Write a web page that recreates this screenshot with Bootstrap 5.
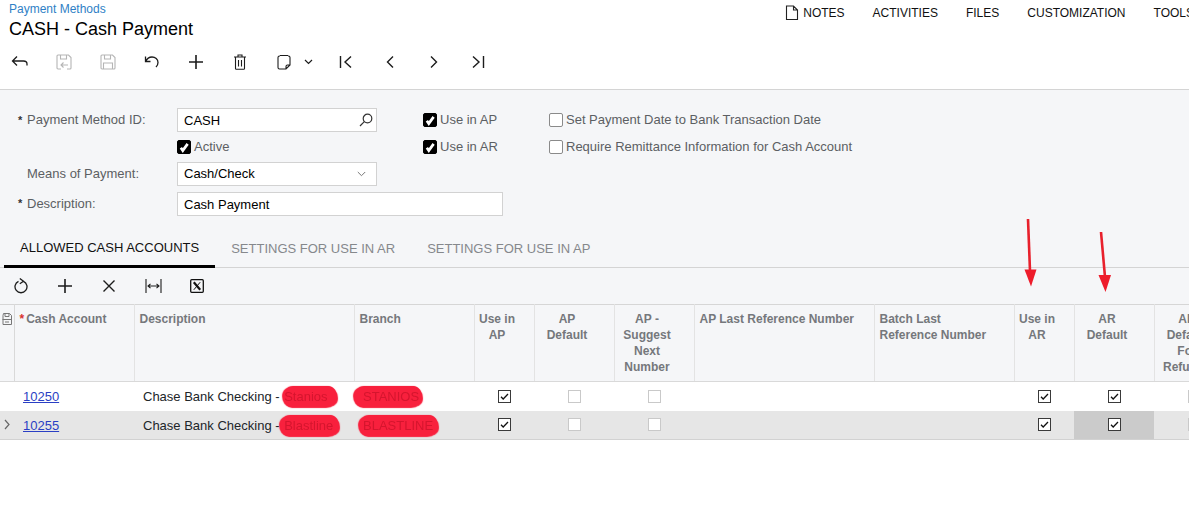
<!DOCTYPE html>
<html lang="en">
<head>
  <meta charset="UTF-8" />
  <title>CASH - Cash Payment</title>
  <link href="https://cdn.jsdelivr.net/npm/bootstrap@5.3.0/dist/css/bootstrap.min.css" rel="stylesheet" />
  <style>
    html, body { height: 100%; overflow: hidden; }
    body { font-family: "Liberation Sans", Arial, sans-serif; font-size: 13px; color: #000; background: #fff; }
    svg { display: block; }
    .page-wrap { width: 1189px; height: 523px; overflow: hidden; }

    .top-head { height: 90px; border-bottom: 1px solid #d4d4d4; }
    .title-box { padding-left: 9px; }
    .crumb-link { color: #2f7fc6; font-size: 12px; line-height: 14px; padding-top: 2px; text-decoration: none; }
    .page-title { font-size: 18px; line-height: 24px; margin: 0; font-weight: 400; padding-top: 1px; }
    .top-menu { gap: 28px; font-size: 12px; line-height: 14px; padding-top: 5px; white-space: nowrap; margin-right: -5px; }
    .top-menu span { color: #111; }
    .main-tools { height: 36px; margin-left: -2px; margin-top: 3px; }
    .tool-btn { width: 44px; height: 36px; padding: 0; border: 0; background: none; color: #1c1c1c; display: flex; align-items: center; justify-content: center; flex: none; }
    .tool-btn.is-off { color: #b5b5b5; }
    .tool-btn.is-clip { margin-right: -4px; }
    .tool-btn.is-narrow { width: 12px; margin-right: 10px; }

    .form-area { background: #f5f6f8; height: 140px; padding-top: 18px; }
    .form-grid { display: grid; grid-template-columns: 177px 200px 46px 126px auto; grid-template-rows: 24px 24px 24px 24px; row-gap: 3px; justify-content: start; }
    .form-grid > div { display: flex; align-items: center; color: #5c5f63; white-space: nowrap; }
    .fld-label { padding-left: 18px; }
    .req-mark { width: 9px; font-size: 11px; font-weight: 700; color: #333; line-height: 1; }
    .fld-input { height: 24px; border-radius: 0; border: 1px solid #d2d2d2; font-size: 13px; padding: 0 6px; color: #000; box-shadow: none; }
    .fld-select { height: 24px; border: 1px solid #d2d2d2; background: #fff; color: #000; padding: 0 6px; display: flex; align-items: center; justify-content: space-between; width: 100%; }
    .fld-search { position: relative; width: 100%; }
    .fld-search svg { position: absolute; right: 3px; top: 4px; }
    .desc-row { grid-column: 2 / 5; margin-top: 6px; }
    .desc-row .fld-input { width: 326px; flex: none; }
    .desc-lbl { margin-top: 5px; }
    .chk.form-check-input { width: 14px; height: 14px; margin: 0 3px 0 0; border-radius: 2px; border: 1px solid #8a8a8a; background-color: #fff; flex: none; }
    .chk.form-check-input:checked { background-color: #000; border-color: #000; background-size: 13px; background-image: url("data:image/svg+xml,%3csvg xmlns='http://www.w3.org/2000/svg' viewBox='0 0 14 14'%3e%3cpath fill='none' stroke='%23fff' stroke-width='2.8' d='M3.500 7.500l2 3L10.500 3.500'/%3e%3c/svg%3e"); }

    .tab-bar { background: #f5f6f8; height: 38px; border-bottom: 1px solid #d4d4d4; flex-wrap: nowrap; padding-left: 4px; }
    .tab-bar .nav-link { height: 38px; padding: 11px 16px 0; font-size: 13px; line-height: 16px; color: #85888c; border-bottom: 3px solid transparent; border-radius: 0; white-space: nowrap; }
    .tab-bar .nav-link.active { color: #111; border-bottom-color: #000; padding-top: 10px; }

    .grid-tools { background: #f5f6f8; height: 36px; margin-left: -1px; }
    .grid-wrap { width: 1234px; }
    .acc-table { table-layout: fixed; width: 1234px; margin: 0; border-collapse: collapse; font-size: 13px; }
    .acc-table > :not(caption) > * > * { padding: 0; box-shadow: none; border: 0; background: transparent; color: inherit; }
    .acc-table thead th { background: #f5f6f8; height: 77px; vertical-align: top; padding: 6px 18px 0 4px; font-size: 12px; line-height: 16px; font-weight: 700; color: #75787c; border-top: 1px solid #d6d6d6; border-bottom: 1px solid #d9d9d9; border-right: 1px solid #e3e3e3; text-align: center; overflow: hidden; }
    .acc-table thead th.txt-left { text-align: left; padding: 6px 16px 0 5px; }
    .acc-table thead th.col-menu { padding: 8px 0 0 2px; border-right-color: #d9d9d9; }
    .acc-table tbody td { height: 29px; vertical-align: middle; padding: 0 0 0 9px; white-space: nowrap; }
    .acc-table tbody td.chk-cell { padding: 0; }
    .acc-table tbody tr.row-on td { background: #e6e6e6; }
    .acc-table tbody tr.row-on td.txt-cell { padding-top: 2px; }
    .acc-table tbody tr.row-on { border-bottom: 1px solid #d2d2d2; }
    .acc-table tbody tr.row-on td.cell-on { background: #cbcbcb; }
    .acc-table tbody td.row-mark { padding: 0; color: #6d6d6d; }
    .acc-link { color: #2a3fc4; text-decoration: underline; }
    .grid-chk { margin: 0 auto; }
    .req-star { color: #d9322e; margin-right: 2px; }
    .smear { display: inline-block; line-height: 21px; height: 21px; background: #f8203d; color: #d5152e; vertical-align: baseline; border-radius: 11px 9px 12px 8px / 10px 11px 9px 11px; box-shadow: 1px 1px 1px #f8203d, -1px 0 1px #f8203d; filter: blur(.4px); }
    .smear-stanios { padding: 0 9px 0 1px; }
    .smear-blastline { padding: 0 6px 0 4px; margin-left: -3px; }
    .smear-stanios-br { padding: 0 3px 0 9px; margin-left: -9px; }
    .smear-blastline-br { padding: 0 5px 0 4px; margin-left: -4px; }
    .red-arrows { position: absolute; left: 0; top: 0; pointer-events: none; }
  </style>
</head>
<body>
  <div class="page-wrap position-relative">
    <div class="top-head">
      <div class="d-flex justify-content-between align-items-start">
        <div class="title-box d-flex flex-column">
          <a class="crumb-link" href="#">Payment Methods</a>
          <h1 class="page-title">CASH - Cash Payment</h1>
        </div>
        <div class="top-menu d-flex align-items-center flex-shrink-0" id="topMenu">
          <span class="d-flex align-items-center gap-1">
            <svg width="14" height="15" viewBox="0 0 14 15" fill="none" stroke="#222" stroke-width="1.1"><path d="M1.500 1h7l4 4v9.500h-11zM8.500 1v4h4"/></svg>
            NOTES
          </span>
          <span>ACTIVITIES</span>
          <span>FILES</span>
          <span>CUSTOMIZATION</span>
          <span>TOOLS</span>
        </div>
      </div>
      <div class="main-tools d-flex align-items-center">
        <button class="tool-btn" type="button"><svg width="18" height="14" viewBox="0 0 18 14" fill="none" stroke="currentColor" stroke-width="1.3"><path d="M6 1.500L1.500 6 6 10.500M1.500 6h11c2 0 3.500 1.300 3.500 3v1.500"/></svg></button>
        <button class="tool-btn is-off" type="button"><svg width="16" height="16" viewBox="0 0 16 16" fill="none" stroke="currentColor" stroke-width="1.1"><path d="M5 15H2a1 1 0 0 1-1-1V2a1 1 0 0 1 1-1h10.500l2.500 2.500V14a1 1 0 0 1-1 1h-3M4.500 1v4h6V1M5 11h7M7.500 8.500L5 11l2.500 2.500"/></svg></button>
        <button class="tool-btn is-off" type="button"><svg width="16" height="16" viewBox="0 0 16 16" fill="none" stroke="currentColor" stroke-width="1.1"><path d="M2 1h10.500L15 3.500V14a1 1 0 0 1-1 1H2a1 1 0 0 1-1-1V2a1 1 0 0 1 1-1zM4.500 1v4h6V1M3.500 15V9h9v6"/></svg></button>
        <button class="tool-btn" type="button"><svg width="16" height="14" viewBox="0 0 16 14" fill="none" stroke="currentColor" stroke-width="1.3"><path d="M1.500 1.500v5h5M1.800 6.500C3 3.500 5.300 2 8 2c3.300 0 6 2.400 6 5.500 0 1.700-.7 3.200-2 4.500"/></svg></button>
        <button class="tool-btn" type="button"><svg width="16" height="16" viewBox="0 0 16 16" stroke="currentColor" stroke-width="1.6"><path d="M8 1v14M1 8h14"/></svg></button>
        <button class="tool-btn" type="button"><svg width="14" height="16" viewBox="0 0 14 16" fill="none" stroke="currentColor" stroke-width="1.1"><path d="M1 3h12M5 3V1h4v2M2.500 3v11.500a.8.8 0 0 0 .8.8h7.400a.8.8 0 0 0 .8-.8V3M5.500 6v6.500M8.500 6v6.500"/></svg></button>
        <button class="tool-btn is-clip" type="button"><svg width="14" height="16" viewBox="0 0 14 16" fill="none" stroke="currentColor" stroke-width="1.1"><path d="M3 2H2.500A1.500 1.500 0 0 0 1 3.500v10A1.500 1.500 0 0 0 2.500 15H9l4-4V3.500A1.500 1.500 0 0 0 11.500 2H11M3 1.500h8M9 15v-2.500a1.500 1.500 0 0 1 1.500-1.500H13"/></svg></button>
        <button class="tool-btn is-narrow" type="button"><svg width="9" height="6" viewBox="0 0 9 6" fill="none" stroke="currentColor" stroke-width="1.2"><path d="M1 1l3.500 3.500L8 1"/></svg></button>
        <button class="tool-btn" type="button"><svg width="14" height="14" viewBox="0 0 14 14" fill="none" stroke="currentColor" stroke-width="1.4"><path d="M1.500 1v12M12 1.500L6 7l6 5.500"/></svg></button>
        <button class="tool-btn" type="button"><svg width="8" height="14" viewBox="0 0 8 14" fill="none" stroke="currentColor" stroke-width="1.4"><path d="M7 1.500L1.500 7 7 12.500"/></svg></button>
        <button class="tool-btn" type="button"><svg width="8" height="14" viewBox="0 0 8 14" fill="none" stroke="currentColor" stroke-width="1.4"><path d="M1 1.500L6.500 7 1 12.500"/></svg></button>
        <button class="tool-btn" type="button"><svg width="14" height="14" viewBox="0 0 14 14" fill="none" stroke="currentColor" stroke-width="1.4"><path d="M12.500 1v12M2 1.500L8 7l-6 5.500"/></svg></button>
      </div>
    </div>

    <div class="form-area">
      <div class="form-grid">
        <div class="fld-label"><span class="req-mark">*</span>Payment Method ID:</div>
        <div>
          <div class="fld-search">
            <input class="form-control fld-input" type="text" value="CASH" />
            <svg width="16" height="16" viewBox="0 0 16 16" fill="none" stroke="#333" stroke-width="1.2"><circle cx="9.500" cy="6.500" r="4.300"/><path d="M6.300 9.700L2 14"/></svg>
          </div>
        </div>
        <div></div>
        <div><input class="form-check-input chk" type="checkbox" checked />Use in AP</div>
        <div><input class="form-check-input chk" type="checkbox" />Set Payment Date to Bank Transaction Date</div>

        <div></div>
        <div><input class="form-check-input chk" type="checkbox" checked />Active</div>
        <div></div>
        <div><input class="form-check-input chk" type="checkbox" checked />Use in AR</div>
        <div><input class="form-check-input chk" type="checkbox" />Require Remittance Information for Cash Account</div>

        <div class="fld-label"><span class="req-mark"></span>Means of Payment:</div>
        <div>
          <div class="fld-select">Cash/Check
            <svg class="me-1" width="9" height="6" viewBox="0 0 9 6" fill="none" stroke="#777"><path d="M.8 1l3.700 3.700L8.200 1"/></svg>
          </div>
        </div>
        <div></div><div></div><div></div>

        <div class="fld-label desc-lbl"><span class="req-mark">*</span>Description:</div>
        <div class="desc-row"><input class="form-control fld-input" type="text" value="Cash Payment" /></div>
      </div>
    </div>

    <ul class="nav tab-bar">
      <li class="nav-item"><a class="nav-link active" href="#">ALLOWED CASH ACCOUNTS</a></li>
      <li class="nav-item"><a class="nav-link" href="#">SETTINGS FOR USE IN AR</a></li>
      <li class="nav-item"><a class="nav-link" href="#">SETTINGS FOR USE IN AP</a></li>
    </ul>

    <div class="grid-tools d-flex align-items-center">
      <button class="tool-btn" type="button"><svg width="16" height="16" viewBox="0 0 16 16" fill="none" stroke="currentColor" stroke-width="1.3"><path d="M5.500 3.300A6 6 0 1 0 10.500 3.300M6.800.5l3.700 2.800-3.700 2.400"/></svg></button>
      <button class="tool-btn" type="button"><svg width="16" height="16" viewBox="0 0 16 16" stroke="currentColor" stroke-width="1.6"><path d="M8 1v14M1 8h14"/></svg></button>
      <button class="tool-btn" type="button"><svg width="14" height="14" viewBox="0 0 14 14" stroke="currentColor" stroke-width="1.4"><path d="M1.500 1.500l11 11M12.500 1.500l-11 11"/></svg></button>
      <button class="tool-btn" type="button"><svg width="17" height="14" viewBox="0 0 17 14" fill="none" stroke="currentColor" stroke-width="1.100"><path d="M1 0v14M16 0v14M3 7h11M5.500 4.800L3 7l2.500 2.200M11.500 4.800L14 7l-2.500 2.200"/></svg></button>
      <button class="tool-btn" type="button"><svg width="14" height="14" viewBox="0 0 14 14" fill="none" stroke="#111"><rect x=".7" y=".7" width="12.600" height="12.600" rx="1" stroke-width="1.300"/><path d="M3.800 3.200l6.400 7.600" stroke-width="2.200"/><path d="M10.200 3.200l-6.400 7.600" stroke-width="1"/></svg></button>
    </div>

    <div class="grid-wrap">
      <table class="table acc-table">
        <colgroup>
          <col width="14" /><col width="120" /><col width="220" /><col width="120" /><col width="60" /><col width="80" />
          <col width="80" /><col width="180" /><col width="140" /><col width="60" /><col width="80" /><col width="80" />
        </colgroup>
        <thead>
          <tr>
            <th class="col-menu"><svg width="10" height="12" viewBox="0 0 10 12" fill="none" stroke="#777"><path d="M1.500.5h6l2 2v9h-8.500v-9zM3 .5v3h4v-3M.5 6.500h9M3 9h4"/></svg></th>
            <th class="txt-left"><span class="req-star">*</span>Cash Account</th>
            <th class="txt-left">Description</th>
            <th class="txt-left">Branch</th>
            <th>Use in AP</th>
            <th>AP Default</th>
            <th>AP - Suggest Next Number</th>
            <th class="txt-left">AP Last Reference Number</th>
            <th class="txt-left">Batch Last<br />Reference Number</th>
            <th>Use in AR</th>
            <th>AR Default</th>
            <th>AR Default For Refunds</th>
          </tr>
        </thead>
        <tbody id="rows"></tbody>
      </table>
    </div>

    <svg class="red-arrows" width="1189" height="523" viewBox="0 0 1189 523">
      <path d="M1028 219l2 52" stroke="#e8202c" stroke-width="2.600" fill="none"/>
      <path d="M1024.500 269.500h12l-5.500 17z" fill="#ee1c2b"/>
      <path d="M1101 232l4 45" stroke="#e8202c" stroke-width="2.600" fill="none"/>
      <path d="M1098.500 275h12.500l-5.500 17z" fill="#ee1c2b"/>
    </svg>
  </div>

  <script src="https://cdn.jsdelivr.net/npm/bootstrap@5.3.0/dist/js/bootstrap.bundle.min.js"></script>
  <script>
    const accounts = [
      { id: '10250', owner: 'Stanios', branch: 'STANIOS', ownerCls: 'smear-stanios', branchCls: 'smear-stanios-br', active: false },
      { id: '10255', owner: 'Blastline', branch: 'BLASTLINE', ownerCls: 'smear-blastline', branchCls: 'smear-blastline-br', active: true }
    ];
    const box = (on) => `<svg class="grid-chk" width="13" height="13" viewBox="0 0 13 13" fill="#fff">
      <rect x=".5" y=".5" width="12" height="12" stroke="${on ? '#3a3a3a' : '#c9c9c9'}" />
      ${on ? '<path d="M3 6.700l2.200 2.300L10 4" fill="none" stroke="#111" stroke-width="1.300"/>' : ''}
    </svg>`;

    document.getElementById('rows').innerHTML = accounts.map(a => `
      <tr class="${a.active ? 'row-on' : ''}">
        <td class="row-mark">${a.active ? '<svg class="ms-1" width="6" height="11" viewBox="0 0 6 11" fill="none" stroke="#666" stroke-width="1.200"><path d="M1 1l4 4.500L1 10"/></svg>' : ''}</td>
        <td class="txt-cell"><a class="acc-link" href="#">${a.id}</a></td>
        <td class="txt-cell">Chase Bank Checking - <span class="smear ${a.ownerCls}">${a.owner}</span></td>
        <td class="txt-cell"><span class="smear ${a.branchCls}">${a.branch}</span></td>
        <td class="chk-cell">${box(true)}</td>
        <td class="chk-cell">${box(false)}</td>
        <td class="chk-cell">${box(false)}</td>
        <td></td>
        <td></td>
        <td class="chk-cell">${box(true)}</td>
        <td class="chk-cell ${a.active ? 'cell-on' : ''}">${box(true)}</td>
        <td class="chk-cell">${box(false)}</td>
      </tr>`).join('');
  </script>
</body>
</html>
